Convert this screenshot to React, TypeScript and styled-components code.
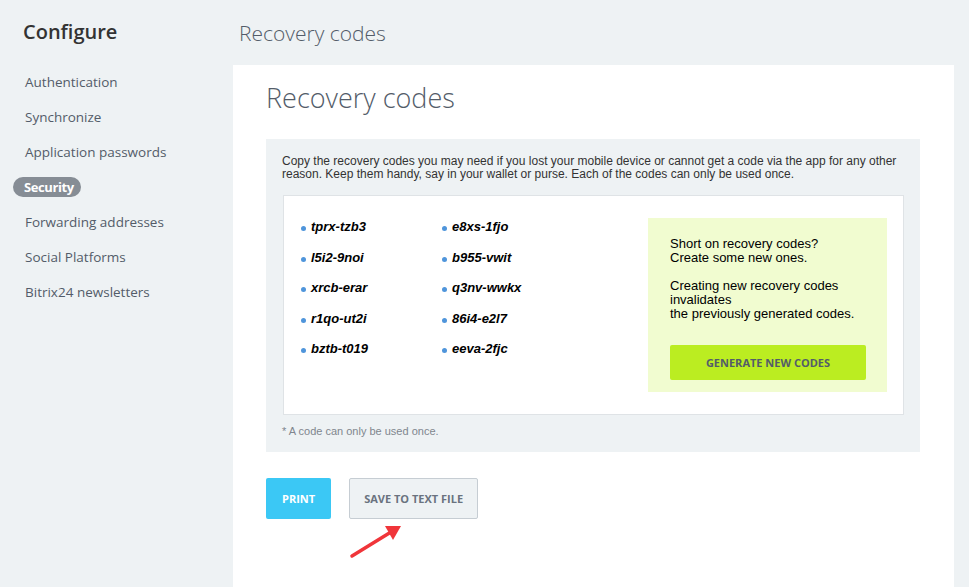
import React from "react";
import styled, { createGlobalStyle } from "styled-components";

const Global = createGlobalStyle`
  html, body { margin: 0; padding: 0; background: #eef2f4; }
  body { font-family: "Liberation Sans", Arial, sans-serif; color: #333; }
  #root { min-height: 587px; }
`;

const Page = styled.div`
  display: flex;
  width: 969px;
  height: 587px;
  overflow: hidden;
  background: #eef2f4;
  position: relative;
`;

const Sidebar = styled.nav`
  width: 233px;
  flex-shrink: 0;
  padding: 18px 0 0 0;
  box-sizing: border-box;
  font-family: "Open Sans", sans-serif;
`;

const SideTitle = styled.div`
  font-size: 20px;
  font-weight: 600;
  color: #333;
  padding-left: 23px;
  line-height: 28px;
  margin-bottom: 26px;
`;

const Menu = styled.ul`
  list-style: none;
  margin: 0;
  padding: 0 0 0 13px;
  display: flex;
  flex-direction: column;
  gap: 15px;
  align-items: flex-start;
`;

const MenuItem = styled.li<{ $active?: boolean }>`
  font-size: ${(p) => (p.$active ? "13px" : "13.5px")};
  line-height: 20px;
  height: 20px;
  padding: ${(p) => (p.$active ? "0 7px 0 11px" : "0 12px")};
  border-radius: 10px;
  color: ${(p) => (p.$active ? "#fff" : "#535c69")};
  background: ${(p) => (p.$active ? "#868d95" : "transparent")};
  font-weight: ${(p) => (p.$active ? 700 : 400)};
  letter-spacing: ${(p) => (p.$active ? "-0.4px" : "0")};
`;

const Main = styled.main`
  flex: 1;
  display: flex;
  flex-direction: column;
  padding-right: 15px;
`;

const Header = styled.div`
  height: 65px;
  box-sizing: border-box;
  padding: 19px 0 0 6px;
  font-family: "Open Sans", sans-serif;
  font-weight: 300;
  font-size: 21px;
  line-height: 28px;
  color: #535c69;
`;

const Panel = styled.section`
  flex: 1;
  background: #fff;
  padding: 17px 34px 0 33px;
`;

const PanelTitle = styled.h1`
  margin: 0 0 25px 0;
  font-family: "Open Sans", sans-serif;
  font-weight: 300;
  font-size: 27px;
  line-height: 32px;
  color: #535c69;
`;

const InfoBox = styled.div`
  background: #eef2f4;
  padding: 16px 16px 14px 16px;
`;

const InfoText = styled.p`
  margin: 0 0 14px 0;
  font-size: 12px;
  line-height: 13px;
  color: #333;
`;

const CodesCard = styled.div`
  background: #fff;
  border: 1px solid #dfe3e6;
  margin-left: 1px;
  display: flex;
  justify-content: space-between;
  align-items: flex-start;
  padding: 22px 16px 22px 17px;
`;

const CodeList = styled.ul`
  list-style: none;
  margin: 1px 0 0 0;
  padding: 0;
  display: grid;
  grid-template-columns: 141px 141px;
  grid-auto-flow: column;
  grid-template-rows: repeat(5, 30.5px);
`;

const Code = styled.li`
  position: relative;
  padding-left: 10px;
  font-size: 13px;
  font-weight: 700;
  font-style: italic;
  line-height: 16px;
  color: #000;
  &::before {
    content: "";
    position: absolute;
    left: 0;
    top: 7px;
    width: 5px;
    height: 5px;
    border-radius: 50%;
    background: #4f95db;
  }
`;

const GreenBox = styled.div`
  width: 239px;
  box-sizing: border-box;
  background: #f1fcd0;
  padding: 19px 21px 12px 22px;
`;

const GreenText = styled.p`
  margin: 0 0 14px 0;
  font-size: 13px;
  line-height: 14px;
  color: #000;
  &:last-of-type { margin-bottom: 0; }
`;

const GenerateButton = styled.button`
  display: block;
  width: 196px;
  height: 35px;
  margin-top: 24px;
  border: none;
  border-radius: 2px;
  background: #bbed21;
  font-family: "Open Sans", sans-serif;
  font-weight: 700;
  font-size: 11px;
  color: #535c69;
  cursor: pointer;
  padding: 0;
`;

const Footnote = styled.div`
  margin-top: 10px;
  font-size: 11px;
  line-height: 13px;
  color: #80868e;
`;

const Actions = styled.div`
  display: flex;
  gap: 18px;
  margin-top: 26px;
`;

const ActionButton = styled.button<{ $primary?: boolean }>`
  height: 41px;
  box-sizing: border-box;
  padding: 0 ${(p) => (p.$primary ? "16px" : "14px")};
  min-width: ${(p) => (p.$primary ? "65px" : "129px")};
  border-radius: 2px;
  border: ${(p) => (p.$primary ? "none" : "1px solid #c6cdd3")};
  background: ${(p) => (p.$primary ? "#3bc8f5" : "#eef2f4")};
  color: ${(p) => (p.$primary ? "#fff" : "#6a737f")};
  font-family: "Open Sans", sans-serif;
  font-weight: 700;
  font-size: 11px;
  cursor: pointer;
`;

const Arrow = styled.svg`
  position: absolute;
  left: 345px;
  top: 518px;
  width: 62px;
  height: 42px;
  pointer-events: none;
`;

const codes = [
  "tprx-tzb3",
  "l5i2-9noi",
  "xrcb-erar",
  "r1qo-ut2i",
  "bztb-t019",
  "e8xs-1fjo",
  "b955-vwit",
  "q3nv-wwkx",
  "86i4-e2l7",
  "eeva-2fjc",
];

const menu = [
  "Authentication",
  "Synchronize",
  "Application passwords",
  "Security",
  "Forwarding addresses",
  "Social Platforms",
  "Bitrix24 newsletters",
];

export default function App() {
  return (
    <Page>
      <Global />
      <Sidebar>
        <SideTitle>Configure</SideTitle>
        <Menu>
          {menu.map((m) => (
            <MenuItem key={m} $active={m === "Security"}>
              {m}
            </MenuItem>
          ))}
        </Menu>
      </Sidebar>
      <Main>
        <Header>Recovery codes</Header>
        <Panel>
          <PanelTitle>Recovery codes</PanelTitle>
          <InfoBox>
            <InfoText>
              Copy the recovery codes you may need if you lost your mobile device or cannot get a code via the app for any other
              <br />
              reason. Keep them handy, say in your wallet or purse. Each of the codes can only be used once.
            </InfoText>
            <CodesCard>
              <CodeList>
                {codes.map((c) => (
                  <Code key={c}>{c}</Code>
                ))}
              </CodeList>
              <GreenBox>
                <GreenText>
                  Short on recovery codes?
                  <br />
                  Create some new ones.
                </GreenText>
                <GreenText>
                  Creating new recovery codes
                  <br />
                  invalidates
                  <br />
                  the previously generated codes.
                </GreenText>
                <GenerateButton>GENERATE NEW CODES</GenerateButton>
              </GreenBox>
            </CodesCard>
            <Footnote>* A code can only be used once.</Footnote>
          </InfoBox>
          <Actions>
            <ActionButton $primary>PRINT</ActionButton>
            <ActionButton>SAVE TO TEXT FILE</ActionButton>
          </Actions>
        </Panel>
      </Main>
      <Arrow viewBox="0 0 62 42">
        <line x1="7" y1="38" x2="46" y2="14" stroke="#f0353a" strokeWidth="3.5" strokeLinecap="round" />
        <polygon points="56,8 40,8 48,22" fill="#f0353a" />
      </Arrow>
    </Page>
  );
}
